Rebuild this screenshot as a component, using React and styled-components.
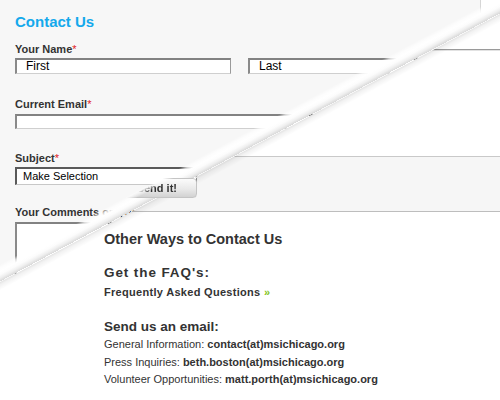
import styled, { createGlobalStyle } from "styled-components";

const GlobalStyle = createGlobalStyle`
  body {
    margin: 0;
    font-family: "Liberation Sans", Arial, sans-serif;
    color: #333;
  }
`;

// angle of the gradient line, perpendicular to the page curl
const CURL_ANGLE = "151.8deg";

export default function App() {
  return (
    <Stage>
      <GlobalStyle />
      <BackPage>
        <Rule />
        <GreyBand />
        <Info>
          <Heading>Other Ways to Contact Us</Heading>
          <SubHeading $spaced>Get the FAQ's:</SubHeading>
          <FaqLink>
            Frequently Asked Questions <Arrow>»</Arrow>
          </FaqLink>
          <SubHeading>Send us an email:</SubHeading>
          <EmailList>
            <li>
              General Information: <b>contact(at)msichicago.org</b>
            </li>
            <li>
              Press Inquiries: <b>beth.boston(at)msichicago.org</b>
            </li>
            <li>
              Volunteer Opportunities: <b>matt.porth(at)msichicago.org</b>
            </li>
          </EmailList>
        </Info>
      </BackPage>
      <CurlShadow />
      <FrontSheet>
        <FormPanel>
          <Title>Contact Us</Title>
          <Label $gap={11}>
            Your Name<Req>*</Req>
          </Label>
          <NameRow>
            <TextBox $width={216}>First</TextBox>
            <TextBox $width={216}>Last</TextBox>
          </NameRow>
          <Label $gap={23}>
            Current Email<Req>*</Req>
          </Label>
          <TextBox $width={360} $height={15} />
          <Label $gap={22}>
            Subject<Req>*</Req>
          </Label>
          <SelectBox>Make Selection</SelectBox>
          <ButtonRow>
            <SendButton>Send it!</SendButton>
          </ButtonRow>
          <Label $gap={7}>Your Comments or Questions</Label>
          <CommentBox />
        </FormPanel>
        <Curl />
      </FrontSheet>
    </Stage>
  );
}

const Stage = styled.div`
  position: relative;
  width: 500px;
  height: 400px;
  overflow: hidden;
  background: #fff;
`;

const BackPage = styled.div`
  display: flex;
  flex-direction: column;
  width: 100%;
  height: 100%;
`;

const Rule = styled.div`
  margin-top: 49px;
  border-top: 1px solid #9a9a9a;
  box-shadow: 0 1px 0 #e2e2e2;
`;

const GreyBand = styled.div`
  margin-top: 106px;
  height: 54px;
  background: #f6f6f6;
  border-top: 1px solid #c9c9c9;
  border-bottom: 1px solid #bdbdbd;
`;

const Info = styled.div`
  padding-left: 104px;
`;

const Heading = styled.h2`
  margin: 18px 0 0;
  font-size: 14.5px;
  line-height: 18px;
  font-weight: bold;
  color: #333;
`;

const SubHeading = styled.h3`
  margin: ${p => (p.$spaced ? "17px" : "20px")} 0 0;
  font-size: 13.5px;
  line-height: 16px;
  font-weight: bold;
  letter-spacing: ${p => (p.$spaced ? "0.9px" : "0")};
  color: #333;
`;

const FaqLink = styled.div`
  margin-top: 4px;
  font-size: 11px;
  line-height: 14px;
  font-weight: bold;
  letter-spacing: 0.3px;
  color: #333;
`;

const Arrow = styled.span`
  color: #82c31b;
`;

const EmailList = styled.ul`
  list-style: none;
  margin: 1px 0 0;
  padding: 0;
  font-size: 11px;
  line-height: 17.5px;

  b {
    font-weight: bold;
  }
`;

const CurlShadow = styled.div`
  position: absolute;
  inset: 0;
  pointer-events: none;
  background: linear-gradient(
    ${CURL_ANGLE},
    transparent 248px,
    rgba(0, 0, 0, 0.13) 248px,
    rgba(0, 0, 0, 0.05) 251px,
    transparent 256px
  );
`;

const FrontSheet = styled.div`
  position: absolute;
  inset: 0;
  background: #fff;
  clip-path: polygon(
    0 0,
    500px 0,
    500px 14px,
    194px 178px,
    197px 178px,
    197px 198px,
    157px 198px,
    0 282px
  );
`;

const Curl = styled.div`
  position: absolute;
  inset: 0;
  z-index: 1;
  pointer-events: none;
  background: linear-gradient(
    ${CURL_ANGLE},
    transparent 233px,
    rgba(255, 255, 255, 0.7) 236px,
    #fff 239px,
    #fcfcfc 242px,
    #efefef 245px,
    #d9d9d9 248px,
    transparent 248px
  );
`;

const FormPanel = styled.div`
  box-sizing: border-box;
  width: 481px;
  height: 400px;
  padding: 13px 0 0 15px;
  background: #f7f7f7;
  border-right: 1px solid #d6d6d6;
  display: flex;
  flex-direction: column;
  align-items: flex-start;
`;

const Title = styled.h1`
  margin: 0;
  font-size: 15px;
  line-height: 18px;
  font-weight: bold;
  color: #14a9ec;
`;

const Label = styled.div`
  margin-top: ${p => p.$gap}px;
  font-size: 11px;
  line-height: 14px;
  font-weight: bold;
  color: #333;
  white-space: nowrap;
`;

const Req = styled.span`
  color: #e0201b;
  font-weight: normal;
`;

const NameRow = styled.div`
  display: flex;
  gap: 17px;
  margin-top: 2px;
`;

const TextBox = styled.div`
  box-sizing: border-box;
  width: ${p => p.$width}px;
  height: ${p => p.$height || 16}px;
  margin-top: ${p => (p.$height ? "3px" : "0")};
  padding-left: 9px;
  background: #fff;
  border-style: solid;
  border-width: 2px 1px 1px 2px;
  border-color: #828282 #9a9a9a #cfcfcf #8a8a8a;
  font-size: 12px;
  line-height: 13px;
  color: #000;
`;

const SelectBox = styled.div`
  box-sizing: border-box;
  width: 182px;
  height: 18px;
  margin-top: 2px;
  padding-left: 6px;
  background: #fff;
  border-style: solid;
  border-width: 2px 1px 1px 2px;
  border-color: #5a5a5a #8a8a8a #c8c8c8 #5a5a5a;
  font-size: 11px;
  line-height: 14px;
  color: #000;
`;

const ButtonRow = styled.div`
  display: flex;
  justify-content: flex-end;
  width: 182px;
  margin-top: -7px;
`;

const SendButton = styled.button`
  position: relative;
  z-index: 2;
  height: 20px;
  padding: 0 19px;
  border: 1px solid #c4c4c4;
  border-radius: 4px;
  background: linear-gradient(#fbfbfb, #e9e9e9 55%, #d2d2d2);
  box-shadow: 0 1px 2px rgba(0, 0, 0, 0.3);
  font-family: "Liberation Sans", Arial, sans-serif;
  font-size: 11px;
  font-weight: bold;
  color: #333;
  mask-image: linear-gradient(${CURL_ANGLE}, transparent 22px, #000 27px);
`;

const CommentBox = styled.div`
  box-sizing: border-box;
  width: 360px;
  height: 160px;
  margin-top: 3px;
  background: #fff;
  border-style: solid;
  border-width: 2px 1px 1px 2px;
  border-color: #828282 #9a9a9a #cfcfcf #8a8a8a;
`;
